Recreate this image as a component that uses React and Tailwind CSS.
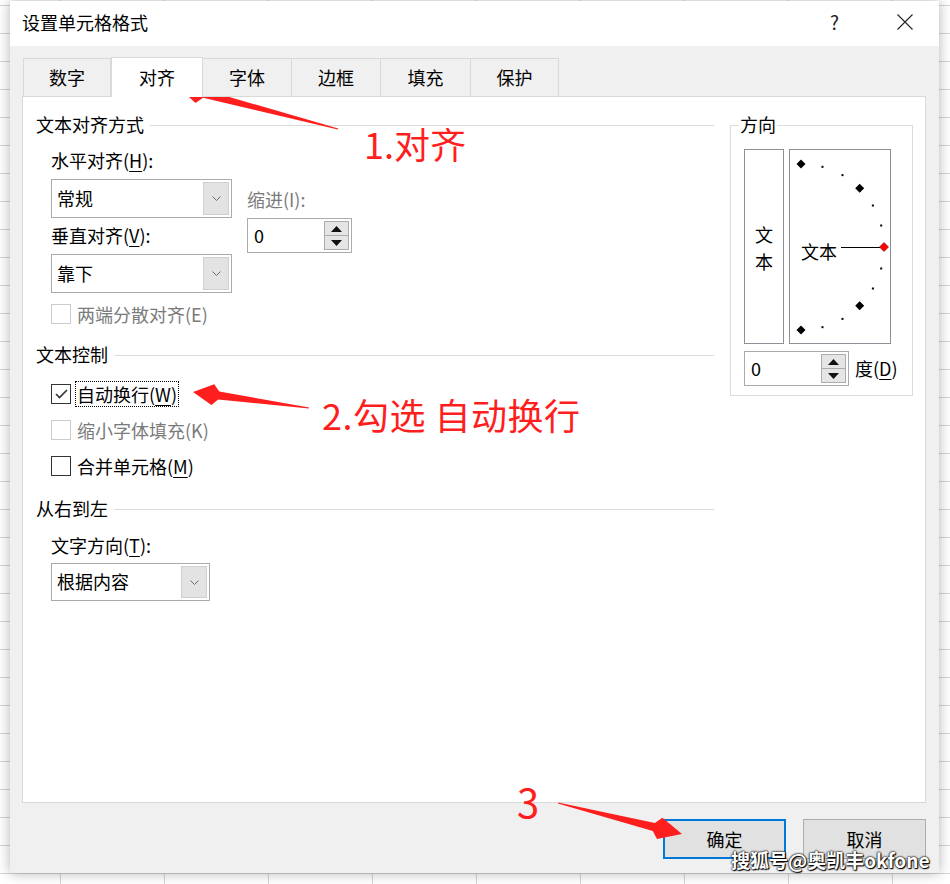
import React from "react";

const RED = "#ff1e1e";

function arrowPoints(tail, tip, wingDist, wingHalf, neckDist, neckHalf, tailHalf) {
  const dx = tip[0] - tail[0];
  const dy = tip[1] - tail[1];
  const len = Math.hypot(dx, dy);
  const ux = dx / len;
  const uy = dy / len;
  const nx = -uy;
  const ny = ux;
  const at = (d, h) => [tip[0] - ux * d + nx * h, tip[1] - uy * d + ny * h];
  const pts = [
    [tail[0] + nx * tailHalf, tail[1] + ny * tailHalf],
    at(neckDist, neckHalf),
    at(wingDist, wingHalf),
    tip,
    at(wingDist, -wingHalf),
    at(neckDist, -neckHalf),
    [tail[0] - nx * tailHalf, tail[1] - ny * tailHalf],
  ];
  return pts.map((p) => p[0].toFixed(1) + "," + p[1].toFixed(1)).join(" ");
}

function U({ children }) {
  return <span className="underline underline-offset-[3px] decoration-1">{children}</span>;
}

function GroupHeader({ title, className = "" }) {
  return (
    <div className={"flex items-center h-[24px] " + className}>
      <span className="text-[18px] leading-[24px] text-black relative top-[-1px]">{title}</span>
      <div className="flex-1 h-px bg-[#dcdcdc] ml-[6px]" />
    </div>
  );
}

function Chevron() {
  return (
    <svg width="9" height="5" viewBox="0 0 9 5">
      <path d="M0.5 0.5 L4.5 4.5 L8.5 0.5" fill="none" stroke="#6b6b6b" strokeWidth="1" />
    </svg>
  );
}

function Select({ w, h, text }) {
  return (
    <div className={"flex bg-white border border-[#ababab] " + w + " " + h}>
      <span className="flex-1 flex items-center pl-[5px] pb-[2px] text-[18px] leading-[24px] text-black">{text}</span>
      <div className="w-[26px] my-[2px] mr-[2px] bg-[#e3e3e3] border border-[#cfcfcf] flex items-center justify-center">
        <Chevron />
      </div>
    </div>
  );
}

function Tri({ up }) {
  return (
    <svg width="11" height="6" viewBox="0 0 11 6">
      {up ? <polygon points="0,6 5.5,0 11,6" fill="#111" /> : <polygon points="0,0 5.5,6 11,0" fill="#111" />}
    </svg>
  );
}

function Spin({ value = "0" }) {
  return (
    <div className="flex w-[105px] h-[35px] bg-white border border-[#ababab]">
      <span className="flex-1 flex items-center pl-[6px] pb-[2px] text-[18px] leading-[24px] text-black">{value}</span>
      <div className="flex flex-col w-[25px] my-[2px] mr-[2px]">
        <div className="flex-1 bg-[#e5e5e5] border border-[#adadad] flex items-center justify-center">
          <Tri up />
        </div>
        <div className="flex-1 bg-[#e5e5e5] border border-[#adadad] border-t-0 flex items-center justify-center">
          <Tri />
        </div>
      </div>
    </div>
  );
}

function Checkbox({ checked, disabled }) {
  return (
    <div
      className={
        "w-[20px] h-[20px] bg-white border flex items-center justify-center shrink-0 " +
        (disabled ? "border-[#cccccc]" : "border-[#333333]")
      }
    >
      {checked && (
        <svg width="13" height="10" viewBox="0 0 13 10">
          <path d="M1 5 L4.5 8.5 L12 1" fill="none" stroke="#333" strokeWidth="1.6" />
        </svg>
      )}
    </div>
  );
}

function Tab({ label, w, selected }) {
  if (selected) {
    return (
      <div className={"h-[40px] bg-white border border-[#d9d9d9] border-b-0 flex items-center justify-center text-[18px] leading-[24px] text-black pb-[2px] " + w}>
        {label}
      </div>
    );
  }
  return (
    <div className={"h-[39px] bg-[#f0f0f0] border border-[#d9d9d9] border-l-0 flex items-center justify-center text-[18px] leading-[24px] text-black pb-[1px] " + w}>
      {label}
    </div>
  );
}

function Orientation() {
  const cx = 11;
  const cy = 97;
  const r = 83;
  const marks = [];
  for (let a = -90; a <= 90; a += 15) {
    const rad = (a * Math.PI) / 180;
    const x = cx + r * Math.cos(rad);
    const y = cy - r * Math.sin(rad);
    if (a === 0) {
      marks.push(
        <polygon key={a} points={`${x},${y - 4.5} ${x + 4.5},${y} ${x},${y + 4.5} ${x - 4.5},${y}`} fill="#ff0000" stroke="#800000" strokeWidth="0.6" />
      );
    } else if (a % 45 === 0) {
      marks.push(
        <polygon key={a} points={`${x},${y - 4.5} ${x + 4.5},${y} ${x},${y + 4.5} ${x - 4.5},${y}`} fill="#000" />
      );
    } else {
      marks.push(<rect key={a} x={x - 1} y={y - 1} width="2" height="2" fill="#000" />);
    }
  }
  return (
    <svg width="100" height="193" viewBox="0 0 100 193" className="block">
      {marks}
      <line x1="51" y1="97.5" x2="90" y2="97.5" stroke="#000" strokeWidth="1" />
      <text x="11" y="109" fontSize="18" fill="#000" fontFamily="'Noto Sans CJK SC', sans-serif">文本</text>
    </svg>
  );
}

export default function App() {
  const t = "text-[18px] leading-[24px] text-black";
  const gray = "text-[18px] leading-[24px] text-[#7b7b7b]";
  return (
    <div
      className="relative w-[950px] h-[884px] overflow-hidden bg-white pl-[10px] pt-[1px] font-['Noto_Sans_CJK_SC',sans-serif] [background-image:linear-gradient(to_bottom,#d4d4d4_1px,transparent_1px),linear-gradient(to_right,#d4d4d4_1px,transparent_1px)] [background-size:104px_28px] [background-position:60px_5px]"
    >
      <div className="w-[929px] h-[872px] bg-[#f0f0f0] flex flex-col shadow-[0_0_12px_rgba(0,0,0,0.3)]">
        {/* Title bar */}
        <div className="h-[45px] bg-white flex items-center pl-[12px] pr-[26px] pb-[3px]">
          <span className={t}>设置单元格格式</span>
          <div className="ml-auto flex items-center">
            <span className="text-[19px] leading-[24px] text-[#222]">?</span>
            <svg width="16" height="16" viewBox="0 0 16 16" className="ml-[58px]">
              <path d="M0.5 0.5 L15.5 15.5 M15.5 0.5 L0.5 15.5" stroke="#222" strokeWidth="1.1" />
            </svg>
          </div>
        </div>

        {/* Body */}
        <div className="flex-1 flex flex-col pl-[12px] pr-[13px]">
          <div className="flex items-end mt-[11px] ml-[1px] -mb-px relative z-10">
            <div className="flex items-end border-l border-[#d9d9d9]">
              <Tab label="数字" w="w-[87px]" />
            </div>
            <Tab label="对齐" w="w-[92px]" selected />
            <Tab label="字体" w="w-[89px]" />
            <Tab label="边框" w="w-[89px]" />
            <Tab label="填充" w="w-[90px]" />
            <Tab label="保护" w="w-[88px]" />
          </div>

          {/* Panel */}
          <div className="w-[904px] h-[707px] bg-white border border-[#d9d9d9] flex pl-[13px]">
            {/* Left column */}
            <div className="w-[678px] flex flex-col pt-[16px]">
              <GroupHeader title="文本对齐方式" />
              <div className="pl-[15px] flex flex-col">
                <span className={t + " mt-[11px] mb-[1px]"}>
                  水平对齐(<U>H</U>):
                </span>
                <div className="flex mt-[6px]">
                  <div className="flex flex-col">
                    <Select w="w-[181px]" h="h-[39px]" text="常规" />
                    <span className={t + " mt-[5px] mb-[1px]"}>
                      垂直对齐(<U>V</U>):
                    </span>
                    <div className="mt-[6px]">
                      <Select w="w-[181px]" h="h-[39px]" text="靠下" />
                    </div>
                  </div>
                  <div className="flex flex-col ml-[15px]">
                    <span className={gray + " mt-[8px] mb-[1px]"}>缩进(I):</span>
                    <div className="mt-[6px]">
                      <Spin />
                    </div>
                  </div>
                </div>
                <div className="flex items-center h-[24px] mt-[9px]">
                  <Checkbox disabled />
                  <span className={gray + " ml-[6px]"}>两端分散对齐(E)</span>
                </div>
              </div>

              <GroupHeader title="文本控制" className="mt-[17px]" />
              <div className="pl-[15px] flex flex-col gap-[10px] mt-[14px]">
                <div className="flex items-center h-[26px]">
                  <Checkbox checked />
                  <span className={"ml-[4px] h-[26px] flex items-center px-[1px] border border-dotted border-black " + t}>
                    自动换行(<U>W</U>)
                  </span>
                </div>
                <div className="flex items-center h-[26px]">
                  <Checkbox disabled />
                  <span className={gray + " ml-[6px]"}>缩小字体填充(K)</span>
                </div>
                <div className="flex items-center h-[26px]">
                  <Checkbox />
                  <span className={t + " ml-[6px]"}>
                    合并单元格(<U>M</U>)
                  </span>
                </div>
              </div>

              <GroupHeader title="从右到左" className="mt-[18px]" />
              <div className="pl-[15px] flex flex-col">
                <span className={t + " mt-[12px] mb-[1px]"}>
                  文字方向(<U>T</U>):
                </span>
                <div className="mt-[5px]">
                  <Select w="w-[159px]" h="h-[38px]" text="根据内容" />
                </div>
              </div>
            </div>

            {/* Right group: 方向 */}
            <div className="relative w-[183px] h-[271px] mt-[28px] ml-[16px] border border-[#dcdcdc] pt-[23px] pl-[13px]">
              <span className={"absolute left-[8px] top-[-14px] bg-white px-[1px] " + t}>方向</span>
              <div className="flex gap-[5px]">
                <div className="w-[40px] h-[195px] border border-[#8e8e96] flex flex-col items-center justify-center pt-[2px]">
                  <span className="text-[18px] leading-[27px] text-black">文</span>
                  <span className="text-[18px] leading-[27px] text-black">本</span>
                </div>
                <div className="w-[102px] h-[195px] border border-[#8e8e96]">
                  <Orientation />
                </div>
              </div>
              <div className="flex items-center mt-[7px]">
                <Spin />
                <span className={t + " ml-[6px] pb-[1px]"}>
                  度(<U>D</U>)
                </span>
              </div>
            </div>
          </div>

          {/* Buttons */}
          <div className="flex justify-end gap-[17px] mt-[16px]">
            <div className="w-[123px] h-[40px] bg-[#e1e1e1] border-2 border-[#0078d7] flex items-center justify-center text-[18px] leading-[24px] text-black">
              确定
            </div>
            <div className="w-[123px] h-[40px] bg-[#e1e1e1] border border-[#adadad] flex items-center justify-center text-[18px] leading-[24px] text-black">
              取消
            </div>
          </div>
        </div>
      </div>

      {/* Annotations */}
      <svg className="absolute left-0 top-0 pointer-events-none" width="950" height="884" viewBox="0 0 950 884">
        <polygon points={arrowPoints([338, 129], [178, 87], 21, 11, 27, 4, 0.6)} fill={RED} />
        <polygon points={arrowPoints([309, 408], [193, 392], 20, 10.5, 26, 4, 0.6)} fill={RED} />
        <polygon points={arrowPoints([558, 803], [682, 834], 23, 11, 29, 4.2, 0.6)} fill={RED} />
      </svg>
      <span className="absolute left-[364px] top-[123px] text-[36px] leading-[40px] text-[#ff1e1e] whitespace-nowrap">1.对齐</span>
      <span className="absolute left-[322px] top-[394px] text-[36px] leading-[40px] text-[#ff1e1e] tracking-[0.5px] whitespace-nowrap">2.勾选 自动换行</span>
      <span className="absolute left-[517px] top-[779px] text-[40px] leading-[44px] text-[#ff1e1e] whitespace-nowrap">3</span>
      <span className="absolute left-[731px] top-[848px] text-[19px] leading-[24px] font-bold text-white whitespace-nowrap [text-shadow:0_0_2px_#000,0_0_2px_#000,1px_1px_1px_#000]">
        搜狐号@奥凯丰okfone
      </span>
    </div>
  );
}
